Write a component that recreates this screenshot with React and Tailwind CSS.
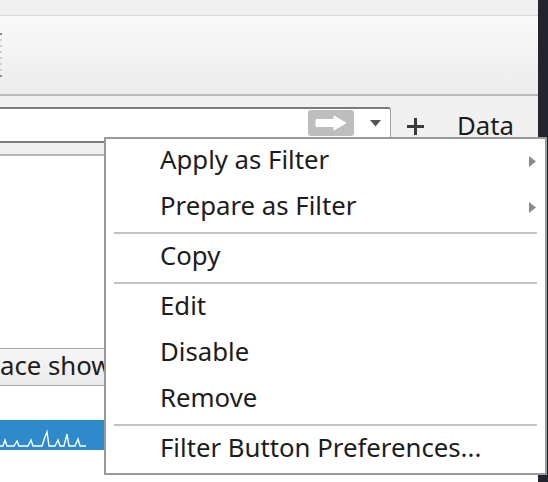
import React from "react";

const font = { fontFamily: '"Noto Sans", "DejaVu Sans", sans-serif' };

function SubArrow() {
  return (
    <svg width="7" height="11" viewBox="0 0 7 11" className="absolute left-[423px] top-[17px]">
      <path d="M0 0 L7 5.5 L0 11 Z" fill="#8a8a8a" />
    </svg>
  );
}

function Item({ children, sub }) {
  return (
    <div className="relative h-[46px] flex items-center pl-[54px] pb-[5px] text-[25.75px] text-[#1c1c1c] leading-none">
      {children}
      {sub && <SubArrow />}
    </div>
  );
}

function Sep() {
  return (
    <div className="h-[4px] flex items-center px-[8px]">
      <div className="h-[2px] w-full bg-[#c2c2c2]" />
    </div>
  );
}

function ContextMenu() {
  return (
    <div className="absolute left-[104px] top-[137px] w-[443px] bg-white border-2 border-[#9a9a9a]" style={font}>
      <Item sub>Apply as Filter</Item>
      <Item sub>Prepare as Filter</Item>
      <Sep />
      <Item>Copy</Item>
      <Sep />
      <Item>Edit</Item>
      <Item>Disable</Item>
      <Item>Remove</Item>
      <Sep />
      <Item>Filter Button Preferences...</Item>
    </div>
  );
}

function Sparkline() {
  return (
    <svg width="104" height="30" viewBox="0 0 104 30" className="block">
      <polyline
        fill="none"
        stroke="white"
        strokeWidth="1.4"
        points="0,26 3,26 5,20 7,26 14,26 17,21 19,26 28,26 31,20 33,26 42,26 45,17 47,12 49,26 55,26 58,20 60,26 64,26 67,14 69,26 75,26 78,19 80,26 86,26"
      />
    </svg>
  );
}

export default function App() {
  const dots = [0, 1, 2, 3, 4, 5, 6, 7];
  return (
    <div className="relative w-[548px] h-[482px] overflow-hidden flex bg-white" style={font}>
      <div className="flex-1 flex flex-col min-w-0">
        <div className="h-[16px] bg-[#efefef] border-b border-[#d8d8d8]" />
        <div className="h-[78px] bg-gradient-to-b from-[#f9f9f9] to-[#ececec] flex flex-col gap-[4px] pt-[17px]">
          {dots.map((d) => (
            <div
              key={d}
              className={`w-[2px] h-[2px] ${d === 0 || d === 7 ? "bg-[#8a8a8a]" : "bg-[#cfcfcf]"}`}
            />
          ))}
        </div>
        <div className="h-[2px] bg-[#bababa]" />
        <div className="h-[58px] bg-[#f0f0f0] pt-[11px] flex items-start">
          <div className="ml-[-10px] w-[401px] h-[36px] bg-white border-y-2 border-r border-[#7b7b7b] border-r-[#a0a0a0] rounded-tr-[3px] flex items-start justify-end pr-[9px] pt-[1px]">
            <div className="w-[46px] h-[26px] bg-[#bebebe] rounded-[3px] flex items-center justify-center">
              <svg width="32" height="16" viewBox="0 0 32 16">
                <path d="M1 4.5 H19 V1 L31 8 L19 15 V11.5 H1 Z" fill="white" strokeLinejoin="round" stroke="white" strokeWidth="1" />
              </svg>
            </div>
            <svg width="11" height="7" viewBox="0 0 11 7" className="ml-[16px] mt-[10px]">
              <path d="M0 0 H11 L5.5 6.5 Z" fill="#555" />
            </svg>
          </div>
          <svg width="17" height="17" viewBox="0 0 17 17" className="ml-[16px] mt-[11px]">
            <rect x="7" y="0" width="3" height="17" fill="#3a3a3a" />
            <rect x="0" y="7" width="17" height="3" fill="#3a3a3a" />
          </svg>
          <div className="ml-[33px] mt-[6px] text-[25.75px] leading-none text-[#1c1c1c]">Data</div>
        </div>
        <div className="h-[2px] bg-[#b5b5b5]" />
        <div className="flex-1 bg-white flex flex-col">
          <div className="mt-[192px] h-[38px] bg-gradient-to-b from-[#f6f6f6] to-[#ebebeb] border-y border-[#a9a9a9] flex items-center overflow-hidden whitespace-nowrap pb-[3px]">
            <span className="text-[25.75px] leading-none text-[#1c1c1c]">ace shows all</span>
          </div>
          <div className="mt-[34px] h-[30px] w-[104px] bg-[#2f8acb]">
            <Sparkline />
          </div>
        </div>
      </div>
      <div className="w-[10px] bg-[#22252d]" />
      <ContextMenu />
    </div>
  );
}
